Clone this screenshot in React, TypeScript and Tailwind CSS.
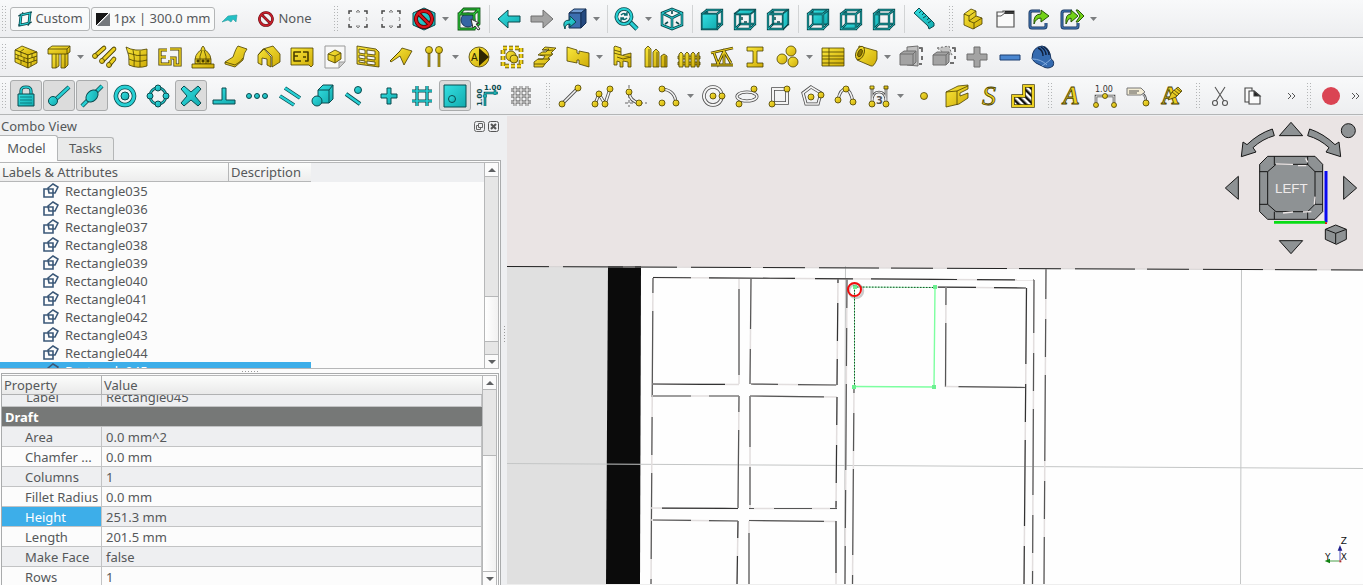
import { Fragment, useLayoutEffect, useRef } from "react";
import type { ReactNode } from "react";

type Tool = {
  icon: string
  label: string
  menu?: boolean
  on?: boolean
  split?: boolean
}

const Tube = ({ d, c = "#27d0d4", o = "#0b4a4e", w = 2 }: { d: string; c?: string; o?: string; w?: number }) => (
  <>
    <path d={d} fill="none" stroke={o} strokeWidth={w + 1.6} />
    <path d={d} fill="none" stroke={c} strokeWidth={w} />
  </>
)

const Yellow = ({ children }: { children: ReactNode }) => (
  <g fill="url(#yellow)" stroke="#4a3f00" strokeWidth="0.8" strokeLinejoin="round">{children}</g>
)

const Teal = ({ children }: { children: ReactNode }) => (
  <g fill="url(#teal)" stroke="#0b4a4e" strokeWidth="1" strokeLinejoin="round">{children}</g>
)

const Gray = ({ children }: { children: ReactNode }) => (
  <g fill="#a3a3a3" stroke="#6f6f6f" strokeWidth="1" strokeLinejoin="round">{children}</g>
)

const Dots = ({ at, r = 3 }: { at: number[][]; r?: number }) => (
  <Yellow>{at.map(([x, y]) => <circle key={`${x}-${y}`} cx={x} cy={y} r={r} />)}</Yellow>
)

const Sketch = ({ d, w = 1.6 }: { d: string; w?: number }) => <Tube d={d} c="#f4f4f4" o="#4c4c4c" w={w} />

const CubeView = ({ face, solid }: { face: string; solid?: boolean }) => (
  <>
    <Tube d="M7 3H22V17H7Z" w={0.7} />
    {!solid && <path d={face} fill="url(#teal)" stroke="#0b4a4e" strokeWidth="0.8" />}
    <Tube d="M2 7H17V22H2ZM2 7L7 3M17 7L22 3M17 22L22 17M2 22L7 17" w={0.7} />
    {solid && <path d={face} fill="url(#teal)" stroke="#0b4a4e" />}
  </>
)

const Ticks = () => <path d="M6 18L8 16M9 10V13M11 15H14" stroke="#0b4a4e" strokeWidth="1.5" />

const ICONS: Record<string, ReactNode> = {
  boxSelect: (
    <g fill="none" stroke="#4a4a4a" strokeWidth="1.5">
      <path d="M3 7V4H6M18 4H21V7M21 17V20H18M6 20H3V17" />
      <path d="M10 5L12 3L14 5ZM10 19L12 21L14 19ZM4 10L3 12L4 14M20 10L21 12L20 14" stroke="#8a8a8a" strokeWidth="1" />
    </g>
  ),
  hidden: (
    <>
      <Teal><path d="M12 1L23 6V18L12 23L1 18V6Z" /></Teal>
      <g fill="none"><path d="M12 4A8 8 0 1 1 11.9 4ZM6.500 6.500L17.500 17.500" stroke="#500" strokeWidth="4" /><path d="M12 4A8 8 0 1 1 11.9 4ZM6.500 6.500L17.500 17.500" stroke="#d8141c" strokeWidth="2.4" /></g>
    </>
  ),
  boundBox: (
    <>
      <circle cx="11" cy="13" r="7" fill="#3465a4" stroke="#16335c" />
      <Tube d="M2 7H17V22H2ZM2 7L7 2H22V17L17 22M17 7L22 2" c="#2fcf3c" o="#0a4a10" w={1.2} />
      <path d="M14 12L22 16L19 17L23 22L21 23L18 19L16 21Z" fill="#f5f5f5" stroke="#333" strokeWidth="1" />
    </>
  ),
  back: <Teal><path d="M1 12L11 3V9H23V15H11V21Z" /></Teal>,
  forward: <Gray><path d="M23 12L13 3V9H1V15H13V21Z" /></Gray>,
  linkGo: (
    <>
      <g stroke="#152f55" fill="#3c6fb0" strokeLinejoin="round"><path d="M6 6L11 2H23L18 6Z" fill="#6f9ad0" /><path d="M6 6H18V21H6Z" /><path d="M18 6L23 2V16L18 21Z" fill="#254a80" /></g>
      <Teal><path d="M2 22Q-2 13 7 13V9L13 15L7 20V17Q2 17 2 22Z" /></Teal>
    </>
  ),
  zoomFit: (
    <>
      <Tube d="M15 15L22 22" w={3} />
      <Tube d="M9 2A7.5 7.5 0 1 1 8.9 2Z" w={2} />
      <path d="M6 8Q9 5 12 8M12 5V8H9M12 11Q9 14 6 11M6 14V11H9" fill="none" stroke="#0b6a6e" strokeWidth="1.4" />
    </>
  ),
  isoCube: <><Tube d="M12 2L22 6V18L12 22L2 18V6ZM2 6L12 11L22 6M12 11V22" w={1} /><path d="M12 4V7M5 17L8 15M19 17L16 15" stroke="#0b4a4e" strokeWidth="1.6" /></>,
  viewFront: <CubeView face="M2 7H17V22H2Z" solid />,
  viewTop: <><CubeView face="M2 7L7 3H22L17 7Z" solid /><Ticks /></>,
  viewRight: <><CubeView face="M17 7L22 3V17L17 22Z" solid /><Ticks /></>,
  viewRear: <CubeView face="M7 3H22V17H7Z" />,
  viewBottom: <CubeView face="M2 22L7 17H22L17 22Z" />,
  viewLeft: <CubeView face="M2 7L7 3V17L2 22Z" />,
  ruler: (
    <>
      <Teal><path d="M2 6L7 1L22 16V19L17 22L16 19Z" /></Teal>
      <path d="M9 4L7 6M12 6L10 8M14 9L11 11M17 11L15 13M19 14L16 16" stroke="#0b4a4e" />
    </>
  ),
  part: (
    <Yellow>
      <path d="M3 7L10 2L15 4V9L21 11V17L12 22L3 18Z" />
      <path d="M3 7L8 9L15 4M8 9V14L15 9M8 14L13 16L21 11M13 16V22" fill="none" />
    </Yellow>
  ),
  group: (
    <g fill="#fafafa" stroke="#555" strokeWidth="1.2"><path d="M3 5H9V4H20V20H3Z" /><path d="M11 4H20V7H10Z" fill="#222" stroke="none" /><path d="M3 9H7L11 6H20" fill="none" strokeWidth="1" /></g>
  ),
  linkMake: (
    <>
      <Tube d="M13 4H5Q3 4 3 6V19Q3 21 5 21H17Q19 21 19 19V16" c="#3d6ea8" o="#16335c" w={1.4} />
      <path d="M7 17Q6 7 14 7V3L22 9L14 15V11Q9 11 7 17Z" fill="#73d216" stroke="#245207" />
    </>
  ),
  linkMulti: (
    <>
      <Tube d="M12 4H4Q2 4 2 6V19Q2 21 4 21H16Q18 21 18 19V16" c="#3d6ea8" o="#16335c" w={1.4} />
      <path d="M6 17Q5 7 11 7V3L18 9L11 15V11Q8 11 6 17ZM16 3H18L24 9L18 15H16L20 9Z" fill="#73d216" stroke="#245207" />
    </>
  ),
  wall: (
    <Yellow>
      <path d="M1 5L8 1L23 7L14 10Z" /><path d="M1 5L14 10V23L1 17Z" /><path d="M14 10L23 7V18L14 23Z" />
      <path d="M1 9L14 14L23 11M1 13L14 18L23 15M7 7V11M4 10V14M10 13V17M7 15V19M18 9V13M20 12V16M17 17V21M10 4L6 7" fill="none" />
    </Yellow>
  ),
  structure: <Yellow><path d="M5 8H12V21L9 23H5ZM14 8H21V20L18 23H14Z" /><path d="M9 9V23M18 9V23" /><path d="M1 4L5 1H23V7L20 9H1Z" /><path d="M1 4H20L23 1M20 4V9" fill="none" /></Yellow>,
  rebar: <g strokeLinecap="round"><Tube d="M3 11L12 3M10 16L22 4M17 20L22 14" c="#ecd021" o="#4a3f00" w={3} /><Dots at={[[3, 11], [10, 16], [17, 20]]} r={2.5} /></g>,
  curtain: <Yellow><path d="M1 2Q10 7 22 4V21Q13 24 4 20Q5 11 1 2Z" /><path d="M3 8Q12 12 22 10M4 14Q12 18 22 15M8 5Q10 12 9 22M15 6V22" fill="none" /></Yellow>,
  floor: <Tube d="M9 5H2V19H12V15M2 12H8M12 4H22V20H17V13H12" c="#ecd021" o="#4a3f00" w={1.6} />,
  building: <Yellow><path d="M12 1Q14 3 14 5Q21 9 20 19H4Q3 9 10 5Q10 3 12 1Z" /><path d="M1 19H23V23H1ZM9 19Q8 11 11 5M15 19Q16 11 13 5M4 14H20" /><path d="M6 15h2v2h-2zM11 15h2v2h-2zM16 15h2v2h-2z" fill="#4a3f00" /></Yellow>,
  ramp: <Yellow><path d="M1 17L9 12Q12 3 14 1L23 4Q20 7 19 15L11 22L1 19Z" /><path d="M1 17L11 20Q17 17 19 13" fill="none" /></Yellow>,
  house: <Yellow><path d="M1 10L6 4L16 1L23 9V17L15 22V11L8 4Z" /><path d="M1 10L7 4L14 12V22L10 20V14L5 13V20L1 18Z" /></Yellow>,
  plan: <Yellow><path d="M1 3H23V20L21 22L19 20H1Z" /><path d="M11 7H4V16H11M4 11H8M13 7H18V16H15M13 12H16" fill="none" strokeWidth="1.6" /></Yellow>,
  page: <><path d="M2 1H22V17L16 23H2Z" fill="#f8f8f8" stroke="#999" /><path d="M22 17L16 23V17Z" fill="#ccc" stroke="#999" /><Yellow><path d="M5 9L12 5L18 8V14L12 18L5 15Z" /><path d="M5 9L12 11L18 8M12 11V18" /></Yellow></>,
  window: <Yellow><path d="M1 1L20 4L23 7V22L1 19Z" /><path d="M3 4L9 5V9L3 8ZM11 5L19 6V10L11 9ZM3 10L9 11V14L3 13ZM11 11L19 12V15L11 14ZM3 15L9 16V18L3 17ZM11 16L19 17V20L11 19Z" fill="#f7f7f7" /></Yellow>,
  roof: <Yellow><path d="M1 16L11 6L13 3L23 6L15 20L11 11L2 17Z" /><path d="M1 16L11 6" fill="none" /></Yellow>,
  axis: <><Tube d="M7 8V22M17 8V22" c="#ecd021" o="#4a3f00" w={1} /><Dots at={[[7, 5], [17, 5]]} r={3.5} /></>,
  section: <><Yellow><circle cx="12" cy="12" r="10" /></Yellow><path d="M12 3L22 12L12 21Z" fill="#2e2700" /><text x="4" y="16" fontSize="10" fill="#2e2700" className="font-['Liberation_Sans']">A</text></>,
  space: <><path d="M3 3H21V21H3Z" fill="none" stroke="#4a3f00" strokeWidth="4.600" strokeDasharray="4 2" /><path d="M3 3H21V21H3Z" fill="none" stroke="#ecd021" strokeWidth="3" strokeDasharray="4 2" /><Yellow><circle cx="11" cy="11" r="5" /><circle cx="14" cy="14" r="4" /></Yellow></>,
  stairs: <Yellow><path d="M1 17L5 14H10L12 11L5 10L9 7H13L16 4L9 5L12 2L23 3L18 8L20 9L15 13L17 14L12 19L10 22H1Z" /><path d="M1 19H12M5 14L16 14M7 10H19M10 6L20 5" fill="none" /></Yellow>,
  panel: <Yellow><path d="M1 2L11 5V8L13 9V6L23 8V22L13 19V15L11 15V18L1 16Z" /></Yellow>,
  chair: <Yellow><path d="M4 1L10 3V10L20 12V22H17V17L12 16V22H9V17L6 16V20H3V2Z" /><path d="M3 5L10 7M3 8L10 10M6 12L12 14L20 12M12 10L20 8V12" /></Yellow>,
  pillars: <Yellow><path d="M1 4L4 1L7 4V22H1ZM9 7L12 4L15 7V22H9ZM17 11L20 9L23 11V22H17Z" /><path d="M5 4V22M13 7V22M21 11V22" fill="none" /></Yellow>,
  fence: <Yellow><path d="M1 11H23V14H1ZM1 17H23V20H1Z" /><path d="M2 22V9L4 7L6 9V22ZM8 22V9L10 7L12 9V22ZM14 22V9L16 7L18 9V22ZM20 22V9L22 7V22Z" /></Yellow>,
  truss: <Tube d="M1 8L23 3M1 20H23M4 8L8 19L14 6L21 18M14 6V19" c="#ecd021" o="#4a3f00" w={1.2} />,
  beam: <Yellow><path d="M4 2H20V6H14V18H20V22H4V18H10V6H4Z" /></Yellow>,
  spheres: <Dots at={[[15, 6], [6, 14], [17, 17]]} r={5} />,
  schedule: <Yellow><path d="M1 3H23V21H1Z" /><path d="M1 7H23M1 11H23M1 14H23M1 18H23M8 3V21" fill="none" /></Yellow>,
  pipe: <Yellow><path d="M5 1L23 6V14Q20 22 17 21L3 15Z" /><ellipse cx="6" cy="8" rx="4" ry="7" transform="rotate(22 6 8)" /><ellipse cx="6" cy="8" rx="2" ry="4" fill="#8a7500" transform="rotate(22 6 8)" /></Yellow>,
  cut: <Gray><path d="M8 2L19 1V21L8 20Z" fill="#c0c0c0" /><path d="M1 9L5 6H17V17L14 20H1Z" /><path d="M1 9H14V20M14 9L17 6" fill="none" /><path d="M20 3H23V7M23 11V15M23 19H20" fill="none" strokeWidth="2" /></Gray>,
  cutLine: <Gray><path d="M5 3L17 1L20 10L12 8Z" fill="#c4c4c4" strokeDasharray="2 2" /><path d="M1 10L5 7H17V17L14 20H1Z" /><path d="M1 10H14V20M14 10L17 7" fill="none" /><path d="M20 3H23V7M23 11V14M22 18H18" fill="none" strokeWidth="2" /></Gray>,
  add: <Gray><path d="M9 2H15V9H22V15H15V22H9V15H2V9H9Z" /></Gray>,
  remove: <path d="M2 10H22V15H2Z" fill="#4a86cf" stroke="#1c3f70" />,
  helmet: <><path d="M1 14Q1 2 11 1Q19 2 20 14Q24 16 22 21Q17 25 11 21Q3 18 1 14Z" fill="#356bb0" stroke="#183560" /><path d="M1 14Q10 14 16 20M11 21Q17 17 20 14" fill="none" stroke="#85aee0" /><path d="M7 3Q12 5 12 11M10 2Q15 5 15 10M13 2Q18 5 18 10" fill="none" stroke="#101f3a" strokeWidth="1.4" /></>,
  lock: <><Tube d="M7 11V7Q7 3 12 3Q17 3 17 7V11" w={1.6} /><Teal><path d="M4 10H20V22H4Z" /></Teal><path d="M6 13H18M6 16H18M6 19H18" stroke="#0b7d80" /></>,
  endpoint: <><Tube d="M22 3L9 15" w={2.6} /><Teal><circle cx="6" cy="17" r="4.500" /></Teal></>,
  midpoint: <><Tube d="M22 2L2 22" w={2.6} /><Teal><ellipse cx="12" cy="12" rx="7" ry="5" transform="rotate(-45 12 12)" /></Teal></>,
  center: <><Tube d="M12 3A9 9 0 1 1 11.900 3Z" w={3} /><Teal><circle cx="12" cy="12" r="4" /></Teal></>,
  angle: <><Tube d="M12 4A8 8 0 1 1 11.900 4Z" w={1.2} /><Teal><circle cx="12" cy="4" r="3" /><circle cx="12" cy="20" r="3" /><circle cx="4" cy="12" r="3" /><circle cx="20" cy="12" r="3" /></Teal></>,
  cross: <Teal><path d="M2 5L5 2L12 8L19 2L22 5L16 12L22 19L19 22L12 16L5 22L2 19L8 12Z" /></Teal>,
  perp: <Teal><path d="M10 4H14V16H23V20H1V16H10Z" /></Teal>,
  extension: <Teal><circle cx="4" cy="12" r="2.500" /><circle cx="12" cy="12" r="2.500" /><circle cx="20" cy="12" r="2.500" /></Teal>,
  parallel: <Tube d="M2 12L16 21M7 4L22 14" w={2.2} />,
  special: <Teal><path d="M7 6L12 1H22V15L18 19H7Z" /><path d="M7 6H18V19M18 6L22 1" fill="none" /><circle cx="6" cy="17" r="5" /></Teal>,
  near: <><Tube d="M2 10L16 20" w={2.4} /><Teal><circle cx="14" cy="6" r="3.500" /></Teal></>,
  ortho: <Teal><path d="M10 4H14V10H20V14H14V20H10V14H4V10H10Z" /></Teal>,
  grid: <Tube d="M7 2V22M17 2V22M2 7H22M2 17H22" w={1.6} />,
  plane: <Teal><path d="M1 1H23V23H1Z" /><circle cx="9" cy="15" r="3.500" /></Teal>,
  dims: (
    <>
      <Tube d="M9 22V9H22M7 12H11M19 6V11" w={1} />
      <g fill="#0b4a4e" fontSize="7" fontWeight="bold" className="font-['DejaVu_Sans']"><text x="8" y="6">1.00</text><text x="-22" y="6" transform="rotate(-90)">1.00</text></g>
    </>
  ),
  gridToggle: <Tube d="M2 6H22M2 12H22M2 18H22M6 2V22M12 2V22M18 2V22" c="#fafafa" o="#555" w={1.2} />,
  line: <><Sketch d="M5 19L19 5" /><Dots at={[[4, 20], [20, 4]]} /></>,
  wire: <><Sketch d="M4 20L8 10L14 20L19 5" /><Dots at={[[4, 20], [8, 10], [14, 20], [19, 5]]} /></>,
  fillet: <><path d="M5 1V23M1 19H23" stroke="#666" strokeDasharray="3 2" /><Sketch d="M5 8Q6 18 16 19" /><Dots at={[[5, 8], [15, 19]]} /></>,
  arc: <><Sketch d="M5 5Q18 6 19 19" /><Dots at={[[5, 5], [5, 19], [19, 19]]} /></>,
  circle: <><Sketch d="M11 3A9 9 0 1 1 10.900 3Z" w={2} /><Dots at={[[11, 12], [20, 12]]} /></>,
  ellipse: <><Sketch d="M12 8A10 4.500 0 1 1 11.900 8Z" /><Dots at={[[19, 5], [4, 20]]} /></>,
  rect: <><Sketch d="M5 5H19V19H5Z" w={2} /><Dots at={[[19, 5], [4, 20]]} /></>,
  polygon: <><Sketch d="M10 3L20 9L17 20H5L2 9Z" /><Dots at={[[10, 13], [20, 11]]} /></>,
  spline: <><Sketch d="M4 16Q6 5 12 5Q17 7 19 18" /><Dots at={[[4, 16], [12, 5], [19, 18]]} /></>,
  bezier: <><Sketch d="M5 5V18M19 5V18M5 18Q5 8 12 8Q19 8 19 18" w={1} /><text x="9" y="20" fontSize="10" fontWeight="bold" fill="#555" className="font-['DejaVu_Sans']">3</text><Yellow><path d="M3 2H7V5H3ZM17 2H21V5H17Z" /></Yellow><Dots at={[[5, 20], [19, 20]]} /></>,
  point: <Dots at={[[12, 12]]} r={3.5} />,
  facebinder: <Yellow><path d="M1 8L13 2L23 1V5L15 9V12L23 9V14L14 20L1 23Z" /><path d="M1 8L12 7V21M12 7L23 2" fill="none" /></Yellow>,
  shape: <text x="4" y="21" fontSize="28" fontStyle="italic" fill="#ecd021" stroke="#4a3f00" strokeWidth="0.8" className="font-['Liberation_Serif']">S</text>,
  hatch: <><path d="M2 12H13V2H22V22H2Z" fill="url(#stripes)" stroke="#4a3f00" strokeWidth="3.500" /><path d="M2 12H13V2H22V22H2Z" fill="none" stroke="#ecd021" strokeWidth="2" /></>,
  text: <text x="3" y="20" fontSize="25" fontWeight="bold" fontStyle="italic" fill="#ecd021" stroke="#4a3f00" strokeWidth="0.8" className="font-['Liberation_Serif']">A</text>,
  dimension: <><Sketch d="M3 20V12H21V20" w={1} /><text x="2" y="8" fontSize="8" fill="#333" className="font-['DejaVu_Sans']">1.00</text><Dots at={[[3, 21], [12, 12], [21, 21]]} r={2.5} /></>,
  label: <><path d="M1 4H15L19 8L15 11H1Z" fill="#f3ecd4" stroke="#777" /><path d="M3 7H13M3 9H11" stroke="#555" /><Sketch d="M17 10Q20 12 20 18" w={0.8} /><Dots at={[[20, 19]]} r={3} /></>,
  style: <><text x="2" y="20" fontSize="25" fontWeight="bold" fill="#ecd021" stroke="#4a3f00" strokeWidth="0.8" className="font-['Liberation_Serif']">A</text><Yellow><path d="M9 16L13 8L19 3L23 7L17 13Z" /><path d="M13 8L18 12M15 6L20 10M17 4L22 8" fill="none" /></Yellow></>,
  scissors: <g fill="none" stroke="#555" strokeWidth="1.100"><path d="M7 3L16 17M17 3L8 17" /><circle cx="7" cy="19" r="2.500" /><circle cx="17" cy="19" r="2.500" /></g>,
  copy: <g fill="#fafafa" stroke="#444" strokeWidth="1.100"><path d="M4 4H11V18H4Z" /><path d="M8 7H13L19 12V20H8Z" /><path d="M13 7V12H19Z" fill="#222" /></g>,
  record: <circle cx="12" cy="12" r="9" fill="#da4453" />,
}

const VIEW_TOOLS: Tool[] = [
  { icon: "boxSelect", label: "Box selection" },
  { icon: "boxSelect", label: "Box element selection" },
  { icon: "hidden", label: "Draw style", menu: true },
  { icon: "boundBox", label: "Bounding box", split: true },
  { icon: "back", label: "Back" },
  { icon: "forward", label: "Forward" },
  { icon: "linkGo", label: "Go to linked object", menu: true, split: true },
  { icon: "zoomFit", label: "Fit all", menu: true },
  { icon: "isoCube", label: "Isometric", split: true },
  { icon: "viewFront", label: "Front" },
  { icon: "viewTop", label: "Top" },
  { icon: "viewRight", label: "Right", split: true },
  { icon: "viewRear", label: "Rear" },
  { icon: "viewBottom", label: "Bottom" },
  { icon: "viewLeft", label: "Left", split: true },
  { icon: "ruler", label: "Measure" },
]

const STRUCTURE_TOOLS: Tool[] = [
  { icon: "part", label: "Create part" },
  { icon: "group", label: "Create group" },
  { icon: "linkMake", label: "Make link" },
  { icon: "linkMulti", label: "Link actions", menu: true },
]

const ARCH_TOOLS: Tool[] = [
  { icon: "wall", label: "Wall" },
  { icon: "structure", label: "Structure", menu: true },
  { icon: "rebar", label: "Rebar" },
  { icon: "curtain", label: "Curtain wall" },
  { icon: "floor", label: "Building part" },
  { icon: "building", label: "Building" },
  { icon: "ramp", label: "Site" },
  { icon: "house", label: "Project" },
  { icon: "plan", label: "Floor" },
  { icon: "page", label: "Reference" },
  { icon: "window", label: "Window" },
  { icon: "roof", label: "Roof" },
  { icon: "axis", label: "Axis", menu: true },
  { icon: "section", label: "Section plane" },
  { icon: "space", label: "Space" },
  { icon: "stairs", label: "Stairs" },
  { icon: "panel", label: "Panel", menu: true },
  { icon: "chair", label: "Equipment" },
  { icon: "pillars", label: "Frame" },
  { icon: "fence", label: "Fence" },
  { icon: "truss", label: "Truss" },
  { icon: "beam", label: "Profile" },
  { icon: "spheres", label: "Material", menu: true },
  { icon: "schedule", label: "Schedule" },
  { icon: "pipe", label: "Pipe", menu: true },
  { icon: "cut", label: "Cut with plane" },
  { icon: "cutLine", label: "Cut with line" },
  { icon: "add", label: "Add component" },
  { icon: "remove", label: "Remove component" },
  { icon: "helmet", label: "Survey" },
]

const SNAP_TOOLS: Tool[] = [
  { icon: "lock", label: "Snap lock", on: true },
  { icon: "endpoint", label: "Snap endpoint", on: true },
  { icon: "midpoint", label: "Snap midpoint", on: true },
  { icon: "center", label: "Snap center" },
  { icon: "angle", label: "Snap angle" },
  { icon: "cross", label: "Snap intersection", on: true },
  { icon: "perp", label: "Snap perpendicular" },
  { icon: "extension", label: "Snap extension" },
  { icon: "parallel", label: "Snap parallel" },
  { icon: "special", label: "Snap special" },
  { icon: "near", label: "Snap near" },
  { icon: "ortho", label: "Snap ortho" },
  { icon: "grid", label: "Snap grid" },
  { icon: "plane", label: "Snap working plane", on: true },
  { icon: "dims", label: "Snap dimensions" },
  { icon: "gridToggle", label: "Toggle grid" },
]

const DRAFT_TOOLS: Tool[] = [
  { icon: "line", label: "Line" },
  { icon: "wire", label: "Polyline" },
  { icon: "fillet", label: "Fillet" },
  { icon: "arc", label: "Arc", menu: true },
  { icon: "circle", label: "Circle" },
  { icon: "ellipse", label: "Ellipse" },
  { icon: "rect", label: "Rectangle" },
  { icon: "polygon", label: "Polygon" },
  { icon: "spline", label: "B-spline" },
  { icon: "bezier", label: "Bezier curve", menu: true },
  { icon: "point", label: "Point" },
  { icon: "facebinder", label: "Facebinder" },
  { icon: "shape", label: "Shape from text" },
  { icon: "hatch", label: "Hatch" },
]

const NOTE_TOOLS: Tool[] = [
  { icon: "text", label: "Text" },
  { icon: "dimension", label: "Dimension" },
  { icon: "label", label: "Label" },
  { icon: "style", label: "Annotation styles" },
]

const EDIT_TOOLS: Tool[] = [
  { icon: "scissors", label: "Cut" },
  { icon: "copy", label: "Copy" },
]

const OBJECTS = ["035", "036", "037", "038", "039", "040", "041", "042", "043", "044", "045"]

const PROPERTIES = [
  ["Area", "0.0 mm^2"],
  ["Chamfer ...", "0.0 mm"],
  ["Columns", "1"],
  ["Fillet Radius", "0.0 mm"],
  ["Height", "251.3 mm"],
  ["Length", "201.5 mm"],
  ["Make Face", "false"],
  ["Rows", "1"],
]

const Handle = () => (
  <div className="flex w-2.5 shrink-0 pl-0.5" aria-hidden="true">
    <svg width="5" height="26" viewBox="0 0 5 26" fill="#b3b5b6">
      {[0, 3, 6, 9, 12, 15, 18, 21, 24].map((y) => <path key={y} d={`M0 ${y}h1v1h-1zM3 ${y}h1v1h-1z`} />)}
    </svg>
  </div>
)

const ToolGroup = ({ tools, children }: { tools: Tool[]; children?: ReactNode }) => (
  <div className="flex shrink-0 items-center" role="group">
    <Handle />
    <div className="flex items-center gap-px">
      {children}
      {tools.map((tool) => (
        <Fragment key={tool.label}>
          <button type="button" aria-label={tool.label} aria-pressed={tool.on}
            className={`flex h-[31px] shrink-0 items-center ${tool.menu ? "w-11 pl-1" : "w-8 justify-center"} ${tool.on ? "rounded-[3px] border border-[#a9abac] bg-[#dcdcdc]" : ""}`}>
            <svg width="24" height="24" viewBox="0 0 24 24" className="shrink-0 overflow-visible">{ICONS[tool.icon]}</svg>
            {tool.menu && <svg width="7" height="4" viewBox="0 0 7 4" className="ml-1.5"><path d="M0 0H7L3.500 4Z" fill="#7c7e80" /></svg>}
          </button>
          {tool.split && <div className="mx-0.5 h-7 w-0.5 border-r border-[#d2d4d5]"></div>}
        </Fragment>
      ))}
    </div>
  </div>
)

const More = () => (
  <button type="button" aria-label="More tools" className="flex h-[31px] w-3.5 shrink-0 items-center justify-center">
    <svg width="9" height="8" viewBox="0 0 9 8" fill="none" stroke="#555" strokeWidth="1"><path d="M1 1L4 4L1 7M5 1L8 4L5 7" /></svg>
  </button>
)

const Bar = ({ label, children }: { label: string; children: ReactNode }) => (
  <div role="toolbar" aria-label={label} className="flex min-h-[38px] shrink-0 items-center gap-[7px] overflow-hidden border-b border-[#b4b6b7] bg-linear-to-b from-[#f8f9fa] to-[#edeef0]">
    {children}
  </div>
)

const Scroll = ({ children }: { children: ReactNode }) => (
  <div className="flex w-3.5 shrink-0 flex-col border-l border-[#b6b7b8] bg-[#e6e6e6]" aria-hidden="true">
    <div className="flex h-3.5 shrink-0 items-center justify-center border-b border-[#b6b7b8] bg-[#fbfbfb]">
      <svg width="8" height="4" viewBox="0 0 8 4"><path d="M0 4H8L4 0Z" fill="#5f6163" /></svg>
    </div>
    {children}
    <div className="flex h-3.5 shrink-0 items-center justify-center border-t border-[#b6b7b8] bg-[#fbfbfb]">
      <svg width="8" height="4" viewBox="0 0 8 4"><path d="M0 0H8L4 4Z" fill="#5f6163" /></svg>
    </div>
  </div>
)

const ModelTree = () => (
  <div className="flex min-h-0 flex-1 border-y border-r border-[#b6b7b8] bg-[#fcfcfc]">
    <div className="min-w-0 flex-1 overflow-hidden">
      <div className="bg-[#eeeff1]">
        <table className="w-[311px] table-fixed border-separate border-spacing-0">
          <thead>
            <tr className="h-[19px] bg-linear-to-b from-[#fcfdfc] to-[#ececec] text-left leading-4">
              <th className="w-[229px] border-r border-b border-[#b6b7b8] p-0 pl-0.5 font-normal">Labels &amp; Attributes</th>
              <th className="border-b border-[#b6b7b8] p-0 pl-0.5 font-normal">Description</th>
            </tr>
          </thead>
        </table>
      </div>
      <ul>
        {OBJECTS.map((id) => {
          const selected = id === "045"
          return <li key={id} className={`flex h-[18px] w-[311px] items-center gap-1.5 pl-[43px] leading-4 ${selected ? "bg-[#3daee9] text-white" : ""}`}>
            <svg width="16" height="16" viewBox="0 0 16 16" fill="none" stroke="#3b5878" strokeWidth="1.600">
              <path d="M1 6H10V14H1Z" /><path d="M5 5L10 1L15 4L12 10H6Z" />
            </svg>
            Rectangle{id}
          </li>
        })}
      </ul>
    </div>
    <Scroll>
      <div className="flex min-h-0 flex-1 flex-col justify-end pb-3">
        <div className="h-[46px] border-y border-[#b6b7b8] bg-linear-to-r from-white to-[#f1f1f1]"></div>
      </div>
    </Scroll>
  </div>
)

const PropertyEditor = () => {
  const pane = useRef<HTMLDivElement>(null)

  useLayoutEffect(() => {
    if (pane.current) pane.current.scrollTop = 8
  }, [])

  return (
    <div className="ml-px flex h-[212px] shrink-0 border-t border-r border-l border-[#a9abac] pt-px pr-px">
      <div className="flex min-w-0 flex-1 border-t border-r border-[#b6b7b8]">
        <div ref={pane} className="min-w-0 flex-1 overflow-hidden bg-[#fcfcfc]">
          <table className="w-full table-fixed border-separate border-spacing-0">
            <thead className="sticky top-0">
              <tr className="h-[19px] bg-linear-to-b from-[#fcfdfc] to-[#e8e8e8] text-left leading-4">
                <th className="w-[100px] border-r border-b border-[#b0b1b2] p-0 pl-0.5 font-normal">Property</th>
                <th className="border-b border-[#b0b1b2] p-0 pl-0.5 font-normal">Value</th>
              </tr>
            </thead>
            <tbody>
              <tr className="h-5 bg-[#eeeff1] leading-4">
                <td className="border-r border-b border-[#c2c3c4] p-0 pl-6">Label</td>
                <td className="border-r border-b border-[#c2c3c4] p-0 pl-1">Rectangle045</td>
              </tr>
              <tr className="h-5 bg-[#767877] leading-4 text-white">
                <th colSpan={2} className="border-b border-[#c2c3c4] p-0 pl-[3px] text-left font-bold">Draft</th>
              </tr>
              {PROPERTIES.map(([name, value], index) => (
                <tr key={name} className={`h-5 leading-4 ${index % 2 ? "bg-[#fcfcfc]" : "bg-[#eeeff1]"}`}>
                  <td className={`overflow-hidden border-r border-b border-[#c2c3c4] p-0 pl-[23px] whitespace-nowrap ${name === "Height" ? "bg-[#3daee9] text-white" : ""}`}>{name}</td>
                  <td className="border-r border-b border-[#c2c3c4] p-0 pl-1">{value}</td>
                </tr>
              ))}
            </tbody>
          </table>
        </div>
        <Scroll>
          <div className="flex min-h-0 flex-1 flex-col pt-[65px]">
            <div className="flex-1 border-t border-[#b6b7b8] bg-linear-to-r from-white to-[#f1f1f1]"></div>
          </div>
        </Scroll>
      </div>
    </div>
  )
}

// pale dashes run along the wall edges, dark ones on top of them
const EDGES = [
  "M653 277.500L1034 280", "M653 278L651 585", "M739 279V384", "M652 384L739 384.500",
  "M751 279L750 384", "M751 384L837 385", "M838 279L837 385",
  "M652 396H739", "M739 396L738 508", "M651 508L738 508.500",
  "M750 396L837 397", "M750 396V508", "M837 397L836 509", "M749 508.500H837",
  "M651 520L738 521", "M738 521L737 585", "M749 521V585", "M749 520.500L836 521.500", "M836 521V585",
  "M847 279L845 585", "M854 387L852.500 585",
  "M935 287L1026 288", "M946 287L945.500 387", "M945.500 386.500L1026 387.500",
  "M1026.500 288L1024 585", "M1034 280L1032.500 585", "M1046 269L1044 585",
]

const Scene = () => (
  <svg className="block h-full w-full" viewBox="507 116 856 469" preserveAspectRatio="xMinYMin slice" aria-label="3D view">
    <path d="M507 116H1363V585H507Z" fill="#eae4e4" />
    <path d="M507 266L1363 270V585H507Z" fill="#fefefe" />
    <path d="M507 266H608L606 585H507Z" fill="#e0e0e0" />
    <path d="M608 266H641L640 585H606Z" fill="#0b0b0b" />
    <path d="M507 463.500L1363 468.500M1241.500 270L1240.500 585M845.500 266L844.500 585" fill="none" stroke="#c4c6c6" />
    <path d="M507 266.500L1363 270" fill="none" stroke="#d6d2d2" />
    <path d="M507 266.500L1363 270" fill="none" stroke="#222" strokeDasharray="42 14 60 12" />
    {EDGES.map((d, index) => (
      <Fragment key={d}>
        <path d={d} fill="none" stroke="#e2dede" strokeWidth="1.500" />
        <path d={d} fill="none" stroke={index % 3 ? "#555" : "#333"} strokeWidth="1.200" strokeDasharray="38 18 62 0 24 20" strokeDashoffset={index * 23} />
      </Fragment>
    ))}
    <path d="M854.500 287V387M854 287L935 287.500" fill="none" stroke="#8df0ab" />
    <path d="M854.500 287V387M854 287L935 287.500" fill="none" stroke="#1c4a2a" strokeDasharray="1.500 1.500" />
    <path d="M935 288L934 387L854 386.500" fill="none" stroke="#7dffa0" strokeWidth="1.400" />
    <path d="M933 285h4v4h-4zM932 385h4v4h-4zM852 385h4v4h-4zM853 285h4v4h-4z" fill="#6cf090" />
    <circle cx="856" cy="291" r="7" fill="none" stroke="#000" strokeOpacity="0.200" strokeWidth="2.500" />
    <circle cx="854.500" cy="289.500" r="6.500" fill="none" stroke="#f00c0c" strokeWidth="2" />
    <path d="M507 584.500H1363" stroke="#eeeeee" />
  </svg>
)

const NavCube = () => (
  <svg className="absolute top-0 right-0" width="160" height="149" viewBox="0 3 480 447" aria-label="Navigation cube">
    <g fill="#8e9294" stroke="#161616" strokeWidth="3" strokeLinejoin="round">
      <path d="M264 22L299 62H229ZM264 416L299 377H229ZM67 219L106 184V253ZM461 219L422 184V253Z" />
      <circle cx="436" cy="47" r="21" />
      <path d="M208 42L214 62Q178 72 150 98L159 111L115 125L120 81L132 89Q166 56 208 42Z" />
      <path d="M320 42L314 62Q350 72 378 98L369 111L413 125L408 81L396 89Q362 56 320 42Z" />
      <path d="M194 124H336L359 148V290L336 313H194L170 290V148Z" />
      <path d="M219 148H314L336 170V268L314 290H219L194 268V170Z" />
      <path d="M214 124V150M314 124V150M170 170H194M336 170H359M170 268H194M336 268H359M214 290V313M314 290V313" fill="none" />
      <path d="M398 330L430 343V373L400 388L367 373V343Z" />
      <path d="M367 343L398 355L430 343M398 355V386" fill="none" />
    </g>
    <path d="M219 147L270 148M285 152H310M336 245L334 268M325 290L300 291M270 291L240 294M308 130L314 142" fill="none" stroke="#eee8e8" strokeWidth="4" />
    <path d="M369 168V322" stroke="#0a0af0" strokeWidth="9" />
    <path d="M213 322H367" stroke="#08dc14" strokeWidth="8" />
    <path d="M366 322h6v5h-6z" fill="#e01010" />
    <text x="265" y="234" textAnchor="middle" fontSize="40" fill="#eeeaea" className="font-['Liberation_Sans']">LEFT</text>
  </svg>
)

const AxisCross = () => (
  <svg className="absolute right-0 bottom-0" width="100" height="70" viewBox="0 0 300 210" aria-label="Axis cross">
    <path d="M231 137V104" stroke="#a9abe0" strokeWidth="6" />
    <path d="M231 90L238 107H224Z" fill="#20208c" />
    <path d="M229 138H200" stroke="#a4cfa4" strokeWidth="6" />
    <path d="M185 138L201 131V145Z" fill="#128212" />
    <path d="M229 136h6v6h-6z" fill="#b03030" />
    <g fontSize="27" fill="#111" className="font-['DejaVu_Sans']"><text x="233" y="87">Z</text><text x="186" y="134">Y</text><text x="233" y="134">X</text></g>
  </svg>
)

const App = () => (
  <div className="flex h-screen flex-col overflow-hidden bg-[#eeeff1] font-['Noto_Sans',sans-serif] text-[13px] text-[#55585a]">
    <svg width="0" height="0" className="absolute" aria-hidden="true">
      <defs>
        <linearGradient id="yellow" x1="0" y1="0" x2="1" y2="1"><stop offset="0" stopColor="#fae83c" /><stop offset="1" stopColor="#cfac08" /></linearGradient>
        <linearGradient id="teal" x1="0" y1="0" x2="1" y2="1"><stop offset="0" stopColor="#34e0e2" /><stop offset="1" stopColor="#12aaae" /></linearGradient>
        <pattern id="stripes" width="5" height="5" patternUnits="userSpaceOnUse" patternTransform="rotate(-45)"><path d="M0 0H5V5H0Z" fill="#fff" /><path d="M0 0H2.500V5H0Z" fill="#111" /></pattern>
      </defs>
    </svg>

    <Bar label="View">
      <ToolGroup tools={[]}>
        <button type="button" className="flex h-6 w-20 items-center justify-center gap-0.5 rounded-[3px] border border-[#b4b6b7] bg-[#f9fafa]">
          <svg width="16" height="16" viewBox="0 0 16 16"><Tube d="M4 4L13 2L12 12L3 14Z" w={1.2} /><path d="M1 5L4 4M6 1L5 3M13 2L15 1M1 14H3M3 15V14M12 12L15 11M11 15L12 12" stroke="#0b4a4e" /></svg>
          Custom
        </button>
        <button type="button" className="flex h-6 w-[124px] items-center justify-center gap-1 rounded-[3px] border border-[#b4b6b7] bg-[#f9fafa] whitespace-nowrap">
          <svg width="14" height="14" viewBox="0 0 14 14"><path d="M0 1H13L0 14Z" fill="#161616" /><path d="M14 1V14H1Z" fill="#75797d" /><path d="M0 14L14 0" stroke="#fff" /></svg>
          1px | 300.0 mm
        </button>
        <button type="button" aria-label="Construction mode" className="flex h-6 w-7 items-center justify-center">
          <svg width="16" height="10" viewBox="0 0 16 10"><path d="M0 8L6 2L15 1L14 8L11 5L9 8L6 6Z" fill="#23bfc4" stroke="#2a9a9e" strokeWidth="0.600" /></svg>
        </button>
        <button type="button" className="flex h-6 w-20 items-center justify-center gap-1">
          <svg width="16" height="16" viewBox="0 0 16 16" fill="none"><path d="M8 1.500A6.500 6.500 0 1 1 7.900 1.500ZM3.500 3.500L12.500 12.500" stroke="#5c0a0e" strokeWidth="2.600" /><path d="M8 1.500A6.500 6.500 0 1 1 7.900 1.500ZM3.500 3.500L12.500 12.500" stroke="#c8202c" strokeWidth="1.600" /></svg>
          None
        </button>
      </ToolGroup>
      <ToolGroup tools={VIEW_TOOLS} />
      <ToolGroup tools={STRUCTURE_TOOLS} />
    </Bar>
    <Bar label="Arch">
      <div className="flex h-[38px] items-center">
        <ToolGroup tools={ARCH_TOOLS} />
      </div>
    </Bar>
    <Bar label="Draft">
      <ToolGroup tools={SNAP_TOOLS} />
      <ToolGroup tools={DRAFT_TOOLS} />
      <ToolGroup tools={NOTE_TOOLS} />
      <ToolGroup tools={EDIT_TOOLS} />
      <div className="flex flex-1 justify-center pl-2"><More /></div>
      <div className="flex items-center gap-px pr-0.5">
        <ToolGroup tools={[{ icon: "record", label: "Record macro" }]} />
        <More />
      </div>
    </Bar>

    <main className="flex min-h-0 flex-1 pt-px">
      <aside className="flex w-[501px] shrink-0 flex-col">
        <div className="flex h-5 shrink-0 items-center gap-[3px] pr-0.5">
          <h2 className="flex-1 pl-px leading-4">Combo View</h2>
          <button type="button" aria-label="Float panel">
            <svg width="11" height="11" viewBox="0 0 11 11" fill="none" stroke="#666"><rect x="0.500" y="0.500" width="10" height="10" rx="2" /><path d="M4.500 2.500H8.500V6.500H4.500ZM4 4.500H2.500V8.500H6.500V7" /></svg>
          </button>
          <button type="button" aria-label="Close panel">
            <svg width="11" height="11" viewBox="0 0 11 11" fill="none" stroke="#555"><rect x="0.500" y="0.500" width="10" height="10" rx="2" /><path d="M3 3L8 8M8 3L3 8" strokeWidth="2" /></svg>
          </button>
        </div>
        <div role="tablist" className="flex h-[25px] shrink-0 items-end border-b border-[#a9abac]">
          <button type="button" role="tab" aria-selected="true" className="-mb-px h-[26px] w-[58px] rounded-tr-[3px] border-t border-r border-[#b4b6b7] bg-[#fcfcfc] pr-1">Model</button>
          <button type="button" role="tab" aria-selected="false" className="h-[23px] w-14 rounded-tr-[3px] border-t border-r border-[#b4b6b7] bg-[#e9eaea]">Tasks</button>
        </div>
        <div className="flex min-h-0 flex-1 flex-col border-r border-[#a9abac] bg-[#fcfcfc] pt-px pr-px">
          <ModelTree />
          <div className="flex h-1 shrink-0 items-center justify-center gap-0.5" aria-hidden="true">
            {[0, 1, 2, 3, 4, 5].map((dot) => <i key={dot} className="size-px bg-[#999]"></i>)}
          </div>
          <PropertyEditor />
        </div>
      </aside>
      <div className="flex w-1.5 shrink-0 flex-col items-center justify-center gap-0.5 pb-[33px]" aria-hidden="true">
        {[0, 1, 2, 3, 4, 5].map((dot) => <i key={dot} className="size-px bg-[#999]"></i>)}
      </div>
      <section className="relative min-w-0 flex-1 overflow-hidden">
        <Scene />
        <NavCube />
        <AxisCross />
      </section>
    </main>
  </div>
)

export default App
